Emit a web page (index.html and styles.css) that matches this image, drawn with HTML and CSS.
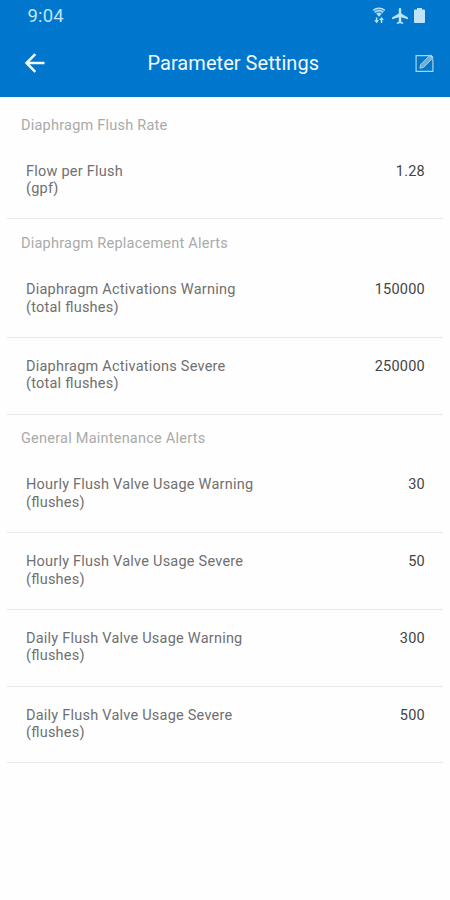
FILE: index.html
```html
<!DOCTYPE html>
<html lang="en">
<head>
    <meta charset="UTF-8">
    <meta name="viewport" content="width=device-width, initial-scale=1.0">
    <title>Parameter Settings</title>
    <link rel="stylesheet" href="styles.css">
</head>
<body>
    <header class="header">
        <div class="status-bar">
            <span class="clock">9:04</span>
            <div class="status-icons">
                <!-- wifi with data arrows -->
                <svg width="14" height="17" viewBox="0 0 13 17" fill="none" stroke="currentColor">
                    <path d="M0.5 3.2Q6.5 -1.4 12.5 3.2L6.5 10Z" fill="currentColor" fill-opacity="0.35" stroke="none"/>
                    <path d="M0.6 3.3Q6.5 -1.2 12.4 3.3M2.3 5.3Q6.5 2 10.7 5.3" stroke-width="1.3"/>
                    <path d="M4 6.8Q6.5 5.2 9 6.8L6.5 9.6Z" fill="currentColor" stroke="none"/>
                    <path d="M4.1 10.5V14M9 16V12.5" stroke-width="1.5"/>
                    <path d="M1.7 13.3H6.5L4.1 16.2ZM6.6 13H11.4L9 10Z" fill="currentColor" stroke="none"/>
                </svg>
                <!-- airplane mode -->
                <svg width="16" height="16" viewBox="2 2 20 20" fill="currentColor">
                    <path d="M22 16v-2l-8.500-5V3.500c0-.83-.67-1.500-1.500-1.500s-1.500.67-1.500 1.500V9L2 14v2l8.500-2.500V19L8 20.500V22l4-1 4 1v-1.500L13.500 19v-5.500z"/>
                </svg>
                <svg class="battery" width="11" height="15" viewBox="0 0 11 15" fill="currentColor">
                    <path d="M3 0h5v1.500h2q1 0 1 1V14q0 1-1 1H1q-1 0-1-1V2.500q0-1 1-1h2z"/>
                </svg>
            </div>
        </div>
        <div class="title-bar">
            <svg class="back" width="22" height="20" viewBox="0 0 22 20" fill="none" stroke="currentColor" stroke-width="2.500">
                <path d="M20.500 10H2.500M11.300 1.200L2.500 10L11.300 18.800"/>
            </svg>
            <h1>Parameter Settings</h1>
            <svg class="edit" width="20" height="19" viewBox="0 0 20 19" fill="none" stroke="currentColor">
                <path d="M15 1.600H1.100V17.400H17.900V5" stroke-width="1.200"/>
                <path d="M5.600 10.700L14.700 1.600L17.500 4.400L8.400 13.500L4.900 14.200Z" fill="currentColor" fill-opacity="0.600" stroke-width="1"/>
                <path d="M14.700 1.600L16 0.600L18.600 3.200L17.500 4.400Z" fill="currentColor" stroke="none"/>
            </svg>
        </div>
    </header>

    <main class="settings">
        <section>
            <h2>Diaphragm Flush Rate</h2>
            <div class="row">
                <div class="label">Flow per Flush<br>(gpf)</div>
                <div class="value">1.28</div>
            </div>
        </section>

        <section>
            <h2>Diaphragm Replacement Alerts</h2>
            <div class="row">
                <div class="label">Diaphragm Activations Warning<br>(total flushes)</div>
                <div class="value">150000</div>
            </div>
            <div class="row">
                <div class="label">Diaphragm Activations Severe<br>(total flushes)</div>
                <div class="value">250000</div>
            </div>
        </section>

        <section>
            <h2>General Maintenance Alerts</h2>
            <div class="row">
                <div class="label">Hourly Flush Valve Usage Warning<br>(flushes)</div>
                <div class="value">30</div>
            </div>
            <div class="row">
                <div class="label">Hourly Flush Valve Usage Severe<br>(flushes)</div>
                <div class="value">50</div>
            </div>
            <div class="row">
                <div class="label">Daily Flush Valve Usage Warning<br>(flushes)</div>
                <div class="value">300</div>
            </div>
            <div class="row">
                <div class="label">Daily Flush Valve Usage Severe<br>(flushes)</div>
                <div class="value">500</div>
            </div>
        </section>
    </main>
</body>
</html>
```
FILE: styles.css
```css
* {
    box-sizing: border-box;
}

body {
    margin: 0;
    min-height: 900px;
    background: #fefefe;
    font-family: Roboto, "Liberation Sans", sans-serif;
}

h1,
h2 {
    margin: 0;
    font-weight: 400;
}

svg {
    display: block;
}

.header {
    height: 97px;
    background: #0077cc;
    color: #f0faff;
}

.status-bar {
    display: flex;
    justify-content: space-between;
    align-items: center;
    height: 31px;
    padding: 0 25px 0 27.5px;
    color: #bfe4f8;
}

.clock {
    font-size: 18.5px;
    letter-spacing: 0.2px;
}

.status-icons {
    display: flex;
    align-items: center;
    gap: 6px;
}

.title-bar {
    display: flex;
    justify-content: space-between;
    align-items: center;
    height: 64px;
    padding: 0 15px 0 23.5px;
}

.title-bar h1 {
    margin-left: 6px;
    font-size: 20px;
    line-height: 24px;
    letter-spacing: 0.05px;
}

.edit {
    color: #a9d3e8;
}

.settings {
    padding: 4px 7px 0;
}

.settings h2 {
    height: 41.6px;
    padding: 15.8px 14px 0;
    font-size: 14.5px;
    line-height: 18px;
    letter-spacing: 0.23px;
    color: #aaa;
}

.row {
    display: flex;
    justify-content: space-between;
    height: 76.8px;
    padding: 20.2px 18px 0 19px;
    border-bottom: 1px solid #e8e8e8;
    font-size: 14.5px;
    line-height: 17.5px;
    letter-spacing: 0.23px;
    font-feature-settings: "liga";
}

.label {
    color: #707070;
}

.value {
    color: #444;
}
```
